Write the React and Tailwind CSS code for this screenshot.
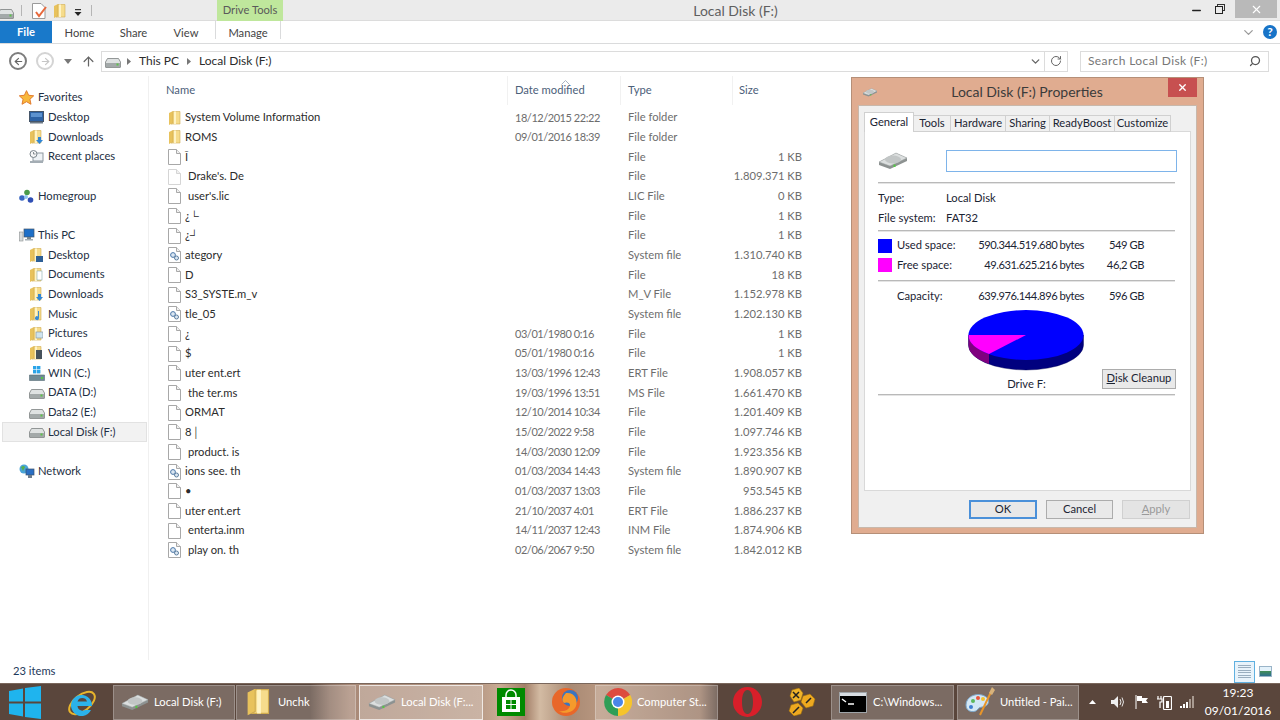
import React from "react";
import { ChevronDown, ArrowLeft, ArrowRight, ArrowUp, RotateCw, Search, X, Minus } from "lucide-react";

const files = [
  { n: "System Volume Information", d: "18/12/2015 22:22", t: "File folder", s: "", i: "folder" },
  { n: "ROMS", d: "09/01/2016 18:39", t: "File folder", s: "", i: "folder" },
  { n: "Ī", d: "", t: "File", s: "1 KB", i: "file" },
  { n: "Drake's. De", d: "", t: "File", s: "1.809.371 KB", i: "file", pad: true },
  { n: "user's.lic", d: "", t: "LIC File", s: "0 KB", i: "file", pad: true },
  { n: "¿└", d: "", t: "File", s: "1 KB", i: "file" },
  { n: "¿┘", d: "", t: "File", s: "1 KB", i: "file" },
  { n: "ategory", d: "", t: "System file", s: "1.310.740 KB", i: "sys" },
  { n: "D", d: "", t: "File", s: "18 KB", i: "file" },
  { n: "S3_SYSTE.m_v", d: "", t: "M_V File", s: "1.152.978 KB", i: "file" },
  { n: "tle_05", d: "", t: "System file", s: "1.202.130 KB", i: "sys" },
  { n: "¿", d: "03/01/1980 0:16", t: "File", s: "1 KB", i: "file" },
  { n: "$", d: "05/01/1980 0:16", t: "File", s: "1 KB", i: "file" },
  { n: "uter ent.ert", d: "13/03/1996 12:43", t: "ERT File", s: "1.908.057 KB", i: "file" },
  { n: "the ter.ms", d: "19/03/1996 13:51", t: "MS File", s: "1.661.470 KB", i: "file", pad: true },
  { n: "ORMAT", d: "12/10/2014 10:34", t: "File", s: "1.201.409 KB", i: "file" },
  { n: "8│", d: "15/02/2022 9:58", t: "File", s: "1.097.746 KB", i: "file" },
  { n: "product. is", d: "14/03/2030 12:09", t: "File", s: "1.923.356 KB", i: "file", pad: true },
  { n: "ions see. th", d: "01/03/2034 14:43", t: "System file", s: "1.890.907 KB", i: "sys" },
  { n: "•", d: "01/03/2037 13:03", t: "File", s: "953.545 KB", i: "file" },
  { n: "uter ent.ert", d: "21/10/2037 4:01", t: "ERT File", s: "1.886.237 KB", i: "file" },
  { n: "enterta.inm", d: "14/11/2037 12:43", t: "INM File", s: "1.874.906 KB", i: "file", pad: true },
  { n: "play on. th", d: "02/06/2067 9:50", t: "System file", s: "1.842.012 KB", i: "sys", pad: true },
];

function Folder({ badge }) {
  return (
    <svg width="14" height="16" viewBox="0 0 14 16" className="shrink-0">
      <path d="M1 3 L5 1 L5 13 L1 15 Z" fill="#e8c25c" />
      <path d="M5 1.5 H12 V14 H3 L5 13 Z" fill="#f6dc8c" stroke="#d2ad50" strokeWidth="0.6" />
      <path d="M7 1.5 V14" stroke="#fff3c4" strokeWidth="2" />
      {badge === "down" && <path d="M9 8 H12 V11 H14 L10.5 15 L7 11 H9 Z" fill="#2f86d6" />}
      {badge === "screen" && <rect x="7" y="9" width="7" height="6" fill="#2d5f96" />}
      {badge === "doc" && <rect x="8" y="4" width="5" height="9" fill="#fff" stroke="#8aa" strokeWidth="0.6" />}
      {badge === "music" && <path d="M10 5 V12 A2 2 0 1 1 9 10.4 V5 Z" fill="#3b8bd0" />}
      {badge === "pic" && <rect x="7" y="6" width="7" height="6" fill="#cfe4ee" stroke="#7a8b96" strokeWidth="0.6" />}
      {badge === "video" && <rect x="7" y="5" width="6" height="9" fill="#46525c" />}
    </svg>
  );
}

function Page({ faint }) {
  return (
    <svg width="13" height="16" viewBox="0 0 13 16" className="shrink-0">
      <path d="M0.5 0.5 H8.5 L12.5 4.5 V15.5 H0.5 Z" fill="#fff" stroke={faint ? "#d5d5d5" : "#a8a8a8"} />
      <path d="M8.5 0.5 V4.5 H12.5" fill="#f0f0f0" stroke={faint ? "#d5d5d5" : "#a8a8a8"} />
    </svg>
  );
}

function SysPage() {
  return (
    <svg width="13" height="16" viewBox="0 0 13 16" className="shrink-0">
      <path d="M0.5 0.5 H8.5 L12.5 4.5 V15.5 H0.5 Z" fill="#fff" stroke="#a8a8a8" />
      <path d="M8.5 0.5 V4.5 H12.5" fill="#f0f0f0" stroke="#a8a8a8" />
      <circle cx="5" cy="8" r="2.4" fill="#dbe7f2" stroke="#4a76a8" strokeWidth="1" />
      <circle cx="8.5" cy="11" r="2" fill="#dbe7f2" stroke="#5d7f9f" strokeWidth="1" />
    </svg>
  );
}

function DriveFlat() {
  return (
    <svg width="16" height="10" viewBox="0 0 16 10" className="shrink-0">
      <path d="M2.5 0.5 H13.5 L15.5 4 V9 Q15.5 9.5 15 9.5 H1 Q0.5 9.5 0.5 9 V4 Z" fill="#dfe2e2" stroke="#7b8080" strokeWidth="0.8" />
      <rect x="1" y="5" width="14" height="4" fill="#a3a9a9" />
      <rect x="11.5" y="5.5" width="2" height="2" fill="#5cc44a" />
    </svg>
  );
}

function DriveIso({ w = 28, h = 18 }) {
  return (
    <svg width={w} height={h} viewBox="0 0 30 18" className="shrink-0">
      <path d="M1 10 L18 1 L29 6 L29 9 L12 17 L1 13 Z" fill="#8d9291" />
      <path d="M1 10 L18 1 L29 6 L12 14 Z" fill="#dcdfdf" stroke="#9aa0a0" strokeWidth="0.5" />
      <ellipse cx="15" cy="7.5" rx="8" ry="4" fill="#c2c6c6" />
      <rect x="15.5" y="12.5" width="2" height="2.5" fill="#53c842" />
    </svg>
  );
}

function Star() {
  return (
    <svg width="15" height="15" viewBox="0 0 24 24" className="shrink-0">
      <path d="M12 1 L15.4 8.4 L23.5 9.3 L17.5 14.8 L19.2 22.8 L12 18.7 L4.8 22.8 L6.5 14.8 L0.5 9.3 L8.6 8.4 Z" fill="#f8b83c" stroke="#e0762a" strokeWidth="1.5" />
    </svg>
  );
}

function Monitor({ kind }) {
  if (kind === "group") {
    return (
      <svg width="15" height="15" viewBox="0 0 15 15" className="shrink-0">
        <circle cx="8" cy="3.5" r="2.8" fill="#4a9a4a" />
        <circle cx="3" cy="9" r="2.8" fill="#3a67c2" />
        <circle cx="11.5" cy="11" r="2.8" fill="#2f4fb5" />
        <circle cx="7" cy="8" r="2" fill="#8fc3ee" />
      </svg>
    );
  }
  if (kind === "net") {
    return (
      <svg width="16" height="15" viewBox="0 0 16 15" className="shrink-0">
        <circle cx="5" cy="5" r="4.5" fill="#4aa4d8" />
        <path d="M2 3 Q5 1 6 3 L4 7 Z" fill="#57b04a" />
        <rect x="7" y="5" width="8" height="6" fill="#2a6fc4" stroke="#39506b" strokeWidth="0.7" />
        <rect x="9" y="11" width="4" height="3" fill="#6d7d8d" />
      </svg>
    );
  }
  return (
    <svg width="16" height="14" viewBox="0 0 16 14" className="shrink-0">
      <rect x="5" y="1" width="10" height="8" fill="#1d6fc8" stroke="#44566a" strokeWidth="0.7" />
      <rect x="8" y="9" width="4" height="2" fill="#77868f" />
      <rect x="0.5" y="4" width="3.5" height="9" fill="#d6dadb" stroke="#8a8f90" strokeWidth="0.6" />
      <rect x="6" y="11" width="8" height="1.5" fill="#a4aeb3" />
    </svg>
  );
}

function NavIcon({ k }) {
  if (k === "star") return <Star />;
  if (k === "group" || k === "net" || k === "pc") return <Monitor kind={k} />;
  if (k === "drive") return <span className="mt-[3px] flex"><DriveFlat /></span>;
  if (k === "win") {
    return (
      <svg width="16" height="15" viewBox="0 0 16 15" className="shrink-0">
        <rect x="4" y="0" width="3.4" height="3.4" fill="#2aa4e8" />
        <rect x="8" y="0" width="3.4" height="3.4" fill="#2aa4e8" />
        <rect x="4" y="4" width="3.4" height="3.4" fill="#2aa4e8" />
        <rect x="8" y="4" width="3.4" height="3.4" fill="#2aa4e8" />
        <path d="M0.5 9 H15.5 V14.5 H0.5 Z" fill="#6f8a95" stroke="#566a73" strokeWidth="0.6" />
        <rect x="12" y="11" width="2" height="2" fill="#58c34a" />
      </svg>
    );
  }
  if (k === "desktop") {
    return (
      <svg width="15" height="13" viewBox="0 0 15 13" className="shrink-0">
        <rect x="0.5" y="0.5" width="14" height="10" fill="#2d62a5" stroke="#46566a" />
        <rect x="2" y="2" width="11" height="4" fill="#5d92cf" />
        <rect x="1" y="11" width="13" height="1.5" fill="#6e7b88" />
      </svg>
    );
  }
  if (k === "recent") {
    return (
      <svg width="15" height="14" viewBox="0 0 15 14" className="shrink-0">
        <rect x="4" y="3" width="10" height="8" fill="#eef2f5" stroke="#8d979f" />
        <circle cx="4.5" cy="4" r="3.5" fill="#f7f7f7" stroke="#7b858c" />
        <path d="M4.5 2 V4 H6.5" stroke="#6a747a" fill="none" strokeWidth="0.8" />
        <rect x="1" y="11" width="13" height="2" fill="#a4adb4" />
      </svg>
    );
  }
  return <Folder badge={k} />;
}

const navItems = [
  { l: "Favorites", k: "star", top: true },
  { l: "Desktop", k: "desktop" },
  { l: "Downloads", k: "down" },
  { l: "Recent places", k: "recent" },
  null,
  { l: "Homegroup", k: "group", top: true },
  null,
  { l: "This PC", k: "pc", top: true },
  { l: "Desktop", k: "screen" },
  { l: "Documents", k: "doc" },
  { l: "Downloads", k: "down" },
  { l: "Music", k: "music" },
  { l: "Pictures", k: "pic" },
  { l: "Videos", k: "video" },
  { l: "WIN (C:)", k: "win" },
  { l: "DATA (D:)", k: "drive" },
  { l: "Data2 (E:)", k: "drive" },
  { l: "Local Disk (F:)", k: "drive", sel: true },
  null,
  { l: "Network", k: "net", top: true },
];

function NavPane() {
  return (
    <div className="w-[149px] shrink-0 border-r border-[#f0f0f0] pt-[12px] pl-[2px] text-[#1e2f44]">
      {navItems.map((it, i) =>
        it ? (
          <div
            key={i}
            className={
              "h-[19.67px] w-[145px] flex items-center gap-[3px] border " +
              (it.sel ? "bg-[#f2f2f2] border-[#e2e2e2] " : "border-transparent ") +
              (it.top ? "pl-[16px]" : "pl-[26px]")
            }
          >
            <span className="w-[16px] shrink-0 flex"><NavIcon k={it.k} /></span>
            <span className="whitespace-nowrap">{it.l}</span>
          </div>
        ) : (
          <div key={i} className="h-[19.67px]"></div>
        )
      )}
    </div>
  );
}

function FileList() {
  return (
    <div className="flex-1 relative">
      <div className="h-[32px] flex items-center text-[#4c607a] pb-[3px]">
        <div className="w-[359px] pl-[17px] h-full flex items-center border-r border-[#f1f1f1]">Name</div>
        <div className="w-[113px] pl-[7px] h-full flex items-center border-r border-[#f1f1f1] relative">
          Date modified
          <svg width="9" height="5" viewBox="0 0 9 5" className="absolute left-[53px] top-[4px]"><path d="M0.5 4.5 L4.5 0.5 L8.5 4.5" fill="none" stroke="#a9b4c2" /></svg>
        </div>
        <div className="w-[112px] pl-[7px] h-full flex items-center border-r border-[#f1f1f1]">Type</div>
        <div className="pl-[6px]">Size</div>
      </div>
      {files.map((f, i) => (
        <div key={i} className="h-[19.67px] flex items-center">
          <div className="w-[359px] pl-[19px] flex items-center gap-[4px] text-[#2b2b2b] whitespace-nowrap">
            <span className="w-[13px] shrink-0 flex">
              {f.i === "folder" && <Folder />}
              {f.i === "file" && <Page faint={f.n === "Drake's. De"} />}
              {f.i === "sys" && <SysPage />}
            </span>
            <span className={f.pad ? "pl-[3px]" : ""}>{f.n}</span>
          </div>
          <div className="w-[113px] pl-[7px] text-[#6d6d6d] whitespace-nowrap text-[11px] tracking-[-0.45px]">{f.d}</div>
          <div className="w-[112px] pl-[7px] text-[#6d6d6d] whitespace-nowrap">{f.t}</div>
          <div className="w-[69px] text-right text-[#6d6d6d] whitespace-nowrap">{f.s}</div>
        </div>
      ))}
    </div>
  );
}

function Ribbon() {
  return (
    <>
      <div className="h-[21px] bg-[#ebebeb] border-b border-[#dcdcdc] flex items-start relative">
        <div className="w-[15px] h-[20px] flex items-center overflow-hidden">
          <span className="-ml-[2px] mt-[7px] flex"><DriveFlat /></span>
        </div>
        <div className="w-px h-[11px] bg-[#b5b5b5] ml-[6px] mt-[5px]"></div>
        <svg width="15" height="16" viewBox="0 0 15 16" className="ml-[10px] mt-[3px]">
          <path d="M0.5 0.5 H9 L13 4.5 V15.5 H0.5 Z" fill="#fff" stroke="#9a9a9a" />
          <path d="M4 9 L7 13 L14 4" fill="none" stroke="#e8693c" strokeWidth="2" />
        </svg>
        <span className="ml-[6px] mt-[3px] flex"><Folder /></span>
        <svg width="8" height="8" viewBox="0 0 8 8" className="ml-[7px] mt-[9px]">
          <rect x="1" y="0" width="6" height="1.2" fill="#333" />
          <path d="M0.5 3 H7.5 L4 7 Z" fill="#222" />
        </svg>
        <div className="w-px h-[11px] bg-[#b5b5b5] ml-[9px] mt-[5px]"></div>
        <div className="w-[66px] h-[21px] bg-[#bfe79c] ml-[125px] flex items-center justify-center text-[#5a5a5a]">Drive Tools</div>
        <div className="flex-1 text-center text-[14px] text-[#5f5f5f] pr-[2px] leading-[21px]">Local Disk (F:)</div>
        <Minus size={13} strokeWidth={2.5} className="text-[#222] mt-[4px] mr-[12px]" />
        <svg width="10" height="10" viewBox="0 0 10 10" className="mt-[4px] mr-[10px]">
          <rect x="2.5" y="0.5" width="7" height="6" fill="none" stroke="#333" />
          <rect x="0.5" y="2.5" width="7" height="7" fill="#ebebeb" stroke="#222" />
        </svg>
        <div className="w-[42px] h-[18px] bg-[#b9b9b9] mr-[3px] flex items-center justify-center">
          <X size={13} strokeWidth={2} className="text-white" />
        </div>
      </div>
      <div className="h-[23px] bg-white border-b border-[#dadbdc] flex items-stretch text-[#444]">
        <div className="w-[52px] bg-[#1979ca] text-white flex items-center justify-center font-bold">File</div>
        <div className="ml-[14px] w-[27px] flex items-center justify-center pt-[2px]">Home</div>
        <div className="ml-[27px] w-[27px] flex items-center justify-center pt-[2px]">Share</div>
        <div className="ml-[27px] w-[24px] flex items-center justify-center pt-[2px]">View</div>
        <div className="ml-[17px] w-[66px] flex items-center justify-center border-x border-[#dadbdc] mb-[4px] pt-[6px]">Manage</div>
        <div className="flex-1"></div>
        <ChevronDown size={15} strokeWidth={2} className="text-[#9a9a9a] self-center mr-[7px]" />
        <div className="w-[14px] h-[14px] rounded-full bg-[#1874c8] text-white text-[12px] font-bold flex items-center justify-center self-center mr-[3px]">?</div>
      </div>
    </>
  );
}

function AddressBar() {
  return (
    <div className="h-[32px] bg-white flex items-center text-[#2b2b2b] pt-[2px]">
      <div className="ml-[9px] w-[18px] h-[18px] rounded-full border-2 border-[#7d7d7d] flex items-center justify-center">
        <ArrowLeft size={11} strokeWidth={2.5} className="text-[#666]" />
      </div>
      <div className="ml-[9px] w-[18px] h-[18px] rounded-full border-2 border-[#d4d4d4] flex items-center justify-center">
        <ArrowRight size={11} strokeWidth={2.5} className="text-[#c6c6c6]" />
      </div>
      <svg width="8" height="5" viewBox="0 0 8 5" className="ml-[10px]"><path d="M0 0 H8 L4 5 Z" fill="#777" /></svg>
      <ArrowUp size={15} strokeWidth={2} className="ml-[9px] text-[#666]" />
      <div className="ml-[5px] w-[967px] h-[21px] border border-[#dcdcdc] flex items-center">
        <span className="ml-[3px] mt-[3px] flex"><DriveFlat /></span>
        <svg width="4" height="7" viewBox="0 0 4 7" className="ml-[6px]"><path d="M0 0 L4 3.5 L0 7 Z" fill="#777" /></svg>
        <span className="ml-[8px] text-[12px]">This PC</span>
        <svg width="4" height="7" viewBox="0 0 4 7" className="ml-[8px]"><path d="M0 0 L4 3.5 L0 7 Z" fill="#777" /></svg>
        <span className="ml-[8px] text-[12px]">Local Disk (F:)</span>
        <div className="flex-1"></div>
        <ChevronDown size={13} strokeWidth={2.5} className="text-[#666] mr-[2px]" />
        <div className="w-[23px] h-full border-l border-[#dcdcdc] flex items-center justify-center">
          <RotateCw size={12} strokeWidth={2} className="text-[#666]" />
        </div>
      </div>
      <div className="ml-[12px] w-[189px] h-[21px] border border-[#dcdcdc] flex items-center pl-[7px] pr-[7px] text-[#777] justify-between">
        <span className="text-[12px] tracking-[0.4px]">Search Local Disk (F:)</span>
        <Search size={12} strokeWidth={2.5} className="text-[#555] -scale-x-100" />
      </div>
    </div>
  );
}

const tabs = [
  { l: "Tools", w: "w-[38px]" },
  { l: "Hardware", w: "w-[56px]" },
  { l: "Sharing", w: "w-[45px]" },
  { l: "ReadyBoost", w: "w-[66px]" },
  { l: "Customize", w: "w-[57px]" },
];

function Sep({ className }) {
  return <div className={"h-[2px] bg-[#b9b9b9] mr-[15px] border-b border-[#e4e4e4] " + className}></div>;
}

function UsageRow({ swatch, label, bytes, size }) {
  return (
    <div className="flex h-[19.5px] items-center">
      <div className={"w-[14px] h-[14px] mr-[5px] " + swatch}></div>
      <div className="w-[60px] whitespace-nowrap">{label}</div>
      <div className="w-[127px] text-right whitespace-nowrap tracking-[-0.45px]">{bytes}</div>
      <div className="w-[60px] text-right whitespace-nowrap tracking-[-0.45px]">{size}</div>
    </div>
  );
}

function Pie() {
  return (
    <svg width="117" height="61" viewBox="0 0 117 61">
      <path d="M0.5 25 V35 A57.5 25 0 0 0 115.5 35 V25 Z" fill="#00007f" stroke="#000050" strokeWidth="0.4" />
      <path d="M0.5 25 V35 A57.5 25 0 0 0 21 54 V44 Z" fill="#7f007f" />
      <ellipse cx="58" cy="25" rx="57.5" ry="25" fill="#0000ff" />
      <path d="M58 25 L0.5 25 A57.5 25 0 0 0 21 44 Z" fill="#ff00ff" />
    </svg>
  );
}

function PropertiesDialog() {
  return (
    <div className="absolute left-[851px] top-[77px] w-[353px] h-[457px] bg-[#e0ac90] border border-[#b58f78] flex flex-col text-[#1b2433]">
      <div className="h-[27px] shrink-0 flex items-start">
        <span className="ml-[10px] mt-[10px] flex"><DriveIso w={16} h={9} /></span>
        <div className="flex-1 text-center text-[14px] text-[#3b3b3b] leading-[27px] pl-[8px]">Local Disk (F:) Properties</div>
        <div className="w-[29px] h-[19px] bg-[#c75050] mr-[6px] flex items-center justify-center">
          <X size={11} strokeWidth={3} className="text-white" />
        </div>
      </div>
      <div className="flex-1 mx-[6px] mb-[5px] bg-[#f0f0f0] border border-[#c8b8ab] px-[5px] pt-[6px] flex flex-col">
        <div className="flex items-end h-[20px] shrink-0 relative z-10 -mb-px">
          <div className="w-[50px] h-[20px] bg-white border border-b-0 border-[#d0d0d0] flex items-center justify-center">General</div>
          {tabs.map((t) => (
            <div key={t.l} className={"h-[17px] bg-[#f0f0f0] border border-[#d0d0d0] -ml-px flex items-center justify-center whitespace-nowrap " + t.w}>{t.l}</div>
          ))}
        </div>
        <div className="h-[360px] bg-white border border-[#d9d9d9] shrink-0 pl-[13px] pt-[18px]">
          <div className="flex items-center h-[22px]">
            <DriveIso w={30} h={18} />
            <div className="ml-[38px] w-[231px] h-[22px] border border-[#7eb4ea]"></div>
          </div>
          <Sep className="mt-[10px]" />
          <div className="flex h-[19.5px] items-center mt-[5px]"><span className="w-[68px]">Type:</span><span>Local Disk</span></div>
          <div className="flex h-[19.5px] items-center"><span className="w-[68px] whitespace-nowrap">File system:</span><span>FAT32</span></div>
          <Sep className="mt-[2px]" />
          <div className="mt-[4px]">
            <UsageRow swatch="bg-[#0000ff]" label="Used space:" bytes="590.344.519.680 bytes" size="549 GB" />
            <UsageRow swatch="bg-[#ff00ff]" label="Free space:" bytes="49.631.625.216 bytes" size="46,2 GB" />
          </div>
          <Sep className="mt-[5px]" />
          <div className="mt-[5px]"><UsageRow swatch="bg-transparent" label="Capacity:" bytes="639.976.144.896 bytes" size="596 GB" /></div>
          <div className="flex mt-[3px]">
            <div className="ml-[90px] w-[117px] flex flex-col items-center">
              <Pie />
              <div className="mt-[5px] leading-[16px]">Drive F:</div>
            </div>
            <div className="ml-[17px] mt-[59px] w-[74px] h-[20px] bg-[#e9e9e9] border border-[#acacac] flex items-center justify-center whitespace-nowrap"><span><u>D</u>isk Cleanup</span></div>
          </div>
          <Sep className="mt-[2px]" />
        </div>
        <div className="flex justify-end gap-[9px] mt-[9px] pr-[1px]">
          <div className="w-[68px] h-[19px] border-2 border-[#4a90d9] bg-[#e8e8e8] flex items-center justify-center">OK</div>
          <div className="w-[67px] h-[19px] border border-[#acacac] bg-[#e9e9e9] flex items-center justify-center">Cancel</div>
          <div className="w-[68px] h-[19px] border border-[#d0d0d0] bg-[#e4e4e4] text-[#9a9a9a] flex items-center justify-center"><u>A</u>pply</div>
        </div>
      </div>
    </div>
  );
}

function TaskBtn({ className, active, icon, label }) {
  return (
    <div className={"h-[35px] flex items-center border shrink-0 whitespace-nowrap " + (active ? "bg-white/25 border-white/70 " : "bg-white/20 border-white/25 ") + className}>
      {icon}
      <span className="text-white">{label}</span>
    </div>
  );
}

function WinLogo() {
  return (
    <svg width="32" height="33" viewBox="0 0 32 33" className="shrink-0">
      <path d="M0 5 L14 2.5 V15.5 H0 Z M16 2 L32 0 V15.5 H16 Z M0 17.5 H14 V30.5 L0 28 Z M16 17.5 H32 V33 L16 31 Z" fill="#1fb4ee" />
    </svg>
  );
}

function IE() {
  return (
    <svg width="29" height="31" viewBox="0 0 29 31" className="shrink-0">
      <ellipse cx="14" cy="16" rx="15" ry="8" transform="rotate(-38 14 16)" fill="none" stroke="#e8b52c" strokeWidth="2" />
      <path d="M24 19 A10.5 10.5 0 1 0 23 23 H17 A5 5 0 0 1 9.5 19 H24 Z M9.5 14.5 A5 5 0 0 1 19 14.5 Z" fill="#2bb2ea" fillRule="evenodd" />
    </svg>
  );
}

function Store() {
  return (
    <svg width="28" height="28" viewBox="0 0 28 28" className="shrink-0">
      <rect width="28" height="28" fill="#008a00" />
      <path d="M5 9 H23 V24 H5 Z" fill="#fff" />
      <path d="M9 9 V7 A5 5 0 0 1 19 7 V9" fill="none" stroke="#fff" strokeWidth="1.5" />
      <path d="M9 12 H13.5 V16 H9 Z M14.5 12 H19 V16 H14.5 Z M9 17 H13.5 V21 H9 Z M14.5 17 H19 V21 H14.5 Z" fill="#008a00" />
    </svg>
  );
}

function Firefox() {
  return (
    <svg width="28" height="28" viewBox="0 0 28 28" className="shrink-0">
      <circle cx="14" cy="14" r="14" fill="#e8672a" />
      <circle cx="18" cy="10" r="8" fill="#3a75c0" />
      <path d="M14 5 C23 4 26 12 24 18 C22 24 13 27 7 23 C13 24 18 21 18 17 C18 14 14 14 12 15 C9 12 11 8 14 5 Z" fill="#f59a2c" />
    </svg>
  );
}

function Chrome() {
  return (
    <svg width="28" height="28" viewBox="0 0 28 28" className="shrink-0">
      <path d="M14 14 L2 7 A14 14 0 0 1 26.2 7 Z" fill="#dd4b3e" />
      <path d="M14 14 L26.2 7 A14 14 0 0 1 14 28 Z" fill="#f6c42c" />
      <path d="M14 14 L14 28 A14 14 0 0 1 2 7 Z" fill="#2f9e56" />
      <circle cx="14" cy="14" r="6.5" fill="#fff" />
      <circle cx="14" cy="14" r="5" fill="#4a86e8" />
    </svg>
  );
}

function Opera() {
  return (
    <svg width="29" height="30" viewBox="0 0 29 30" className="shrink-0">
      <path fillRule="evenodd" d="M14.5 0 A14.5 15 0 1 1 14.5 30 A14.5 15 0 1 1 14.5 0 Z M14.5 3 C10.5 3 9 9 9 15 C9 21 10.5 27 14.5 27 C18.5 27 20 21 20 15 C20 9 18.5 3 14.5 3 Z" fill="#d81f2a" />
    </svg>
  );
}

function Hex() {
  return (
    <svg width="28" height="28" viewBox="0 0 28 28" className="shrink-0">
      <path d="M4 2 L11 0 L15 5 L13 12 L6 14 L2 8 Z" fill="#f0b429" stroke="#9a6d10" strokeWidth="0.6" />
      <path d="M15 8 L22 6 L27 11 L25 18 L18 20 L13 14 Z" fill="#eda920" stroke="#9a6d10" strokeWidth="0.6" />
      <path d="M3 17 L10 15 L15 20 L13 26 L6 28 L1 23 Z" fill="#eda920" stroke="#9a6d10" strokeWidth="0.6" />
      <path d="M5 4 L11 10 M11 4 L5 10 M18 15 L23 10 M5 25 L11 19" stroke="#222" strokeWidth="1.5" />
    </svg>
  );
}

function Cmd() {
  return (
    <svg width="28" height="21" viewBox="0 0 28 21" className="shrink-0">
      <rect x="0.5" y="0.5" width="27" height="20" fill="#000" stroke="#9fa4a8" />
      <rect x="1" y="1" width="26" height="3" fill="#d8dde2" />
      <path d="M3 7 L7 10 M9 12 H15" stroke="#fff" strokeWidth="1.5" />
    </svg>
  );
}

function Paint() {
  return (
    <svg width="30" height="30" viewBox="0 0 30 30" className="shrink-0">
      <path d="M1 18 C1 10 10 6 17 8 C24 10 25 15 22 18 C19 21 15 19 13 22 C11 26 1 26 1 18 Z" fill="#d3e7f5" stroke="#7ba5c8" />
      <circle cx="8" cy="14" r="2" fill="#5cb85c" />
      <circle cx="13" cy="11" r="2" fill="#e8563a" />
      <circle cx="18" cy="12" r="2" fill="#f2c230" />
      <circle cx="6" cy="20" r="2" fill="#3f7fd0" />
      <path d="M15 28 L26 5" stroke="#e8952a" strokeWidth="2" />
      <path d="M24 6 L27 0 L30 3 L27 8 Z" fill="#d8b27a" />
    </svg>
  );
}

function Tray() {
  return (
    <div className="flex items-center text-white">
      <svg width="7" height="4" viewBox="0 0 7 4" className="ml-[10px]"><path d="M0 4 L3.5 0 L7 4 Z" fill="#fff" /></svg>
      <svg width="14" height="14" viewBox="0 0 14 14" className="ml-[15px]">
        <path d="M0 5 H3 L7 1 V13 L3 9 H0 Z" fill="#f0f0f0" />
        <path d="M9 4 Q11 7 9 10 M11 2.5 Q14 7 11 11.5" fill="none" stroke="#e5e5e5" />
      </svg>
      <svg width="14" height="14" viewBox="0 0 14 14" className="ml-[10px]">
        <path d="M1 0 V14" stroke="#fff" />
        <path d="M2 1 H7 V3 H13 L11 5.5 L13 8 H7 V6 H2 Z" fill="#fff" />
      </svg>
      <svg width="15" height="15" viewBox="0 0 15 15" className="ml-[8px]">
        <rect x="6.5" y="1.5" width="8" height="13" rx="1" fill="none" stroke="#fff" strokeWidth="1.2" />
        <rect x="9" y="6" width="3" height="7" fill="#fff" />
        <path d="M1 1 V4 M4 1 V4 M0 4 H5 V7 H3 V13" fill="none" stroke="#fff" strokeWidth="1.2" />
      </svg>
      <svg width="15" height="12" viewBox="0 0 15 12" className="ml-[8px]">
        <rect x="0" y="10" width="2" height="2" fill="#fff" />
        <rect x="3" y="8" width="2" height="4" fill="#fff" />
        <rect x="6" y="6" width="2" height="6" fill="#fff" />
        <rect x="9" y="3" width="2" height="9" fill="#a89a90" />
        <rect x="12" y="0" width="2" height="12" fill="#a89a90" />
      </svg>
      <div className="w-[70px] ml-[8px] text-center leading-[18px] text-[12px]">
        <div>19:23</div>
        <div>09/01/2016</div>
      </div>
    </div>
  );
}

function Taskbar() {
  return (
    <div className="h-[37px] shrink-0 border-t border-[#7a675c] flex items-center bg-[linear-gradient(90deg,#5a463c_0,#5a463c_310px,#8d7263_330px,#a98a78_350px,#b89a86_480px,#c9ab93_500px,#a37f68_525px,#d3bba3_540px,#a98a74_570px,#b89780_600px,#ab8b76_640px,#9a7a66_700px,#5a463c_718px,#5a463c_100%)]">
      <div className="ml-[9px] flex"><WinLogo /></div>
      <div className="ml-[27px] flex"><IE /></div>
      <TaskBtn className="ml-[16px] w-[122px] pl-[7px] gap-[5px]" icon={<DriveIso w={28} h={17} />} label="Local Disk (F:)" />
      <TaskBtn className="ml-px w-[120px] pl-[9px] gap-[6px]" icon={<span className="scale-[1.9] mx-[6px] flex"><Folder /></span>} label="Unchk" />
      <TaskBtn active className="ml-[3px] w-[124px] pl-[8px] gap-[5px]" icon={<DriveIso w={28} h={17} />} label="Local Disk (F:..." />
      <div className="ml-[14px] flex"><Store /></div>
      <div className="ml-[27px] flex"><Firefox /></div>
      <TaskBtn className="ml-[15px] w-[123px] pl-[8px] gap-[5px]" icon={<Chrome />} label="Computer St..." />
      <div className="ml-[15px] flex"><Opera /></div>
      <div className="ml-[26px] flex"><Hex /></div>
      <TaskBtn className="ml-[15px] w-[123px] pl-[7px] gap-[6px]" icon={<Cmd />} label="C:\Windows..." />
      <TaskBtn className="ml-[3px] w-[122px] pl-[7px] gap-[5px]" icon={<Paint />} label="Untitled - Pai..." />
      <Tray />
    </div>
  );
}

export default function App() {
  return (
    <div className="w-[1280px] h-[720px] overflow-hidden relative flex flex-col bg-white text-[11.2px] font-['Lato',sans-serif]">
      <Ribbon />
      <AddressBar />
      <div className="flex-1 flex min-h-0">
        <NavPane />
        <FileList />
      </div>
      <div className="h-[23px] shrink-0 flex items-center text-[#1e395b] pl-[13px]">
        <span className="flex-1">23 items</span>
        <div className="w-[21px] h-[22px] border border-[#5fb0e0] bg-[#e8f3fb] flex flex-col justify-center gap-[2px] px-[3px] mr-[4px]">
          <div className="h-[3px] border-y border-[#9aaebf]"></div>
          <div className="h-[3px] border-y border-[#9aaebf]"></div>
          <div className="h-[3px] border-y border-[#9aaebf]"></div>
        </div>
        <div className="w-[13px] h-[11px] border border-[#9ab4c8] bg-[linear-gradient(180deg,#e4f2fb_0,#e4f2fb_50%,#3f8a5a_50%,#2e6f8f_100%)] mr-[8px]"></div>
      </div>
      <Taskbar />
      <PropertiesDialog />
    </div>
  );
}
